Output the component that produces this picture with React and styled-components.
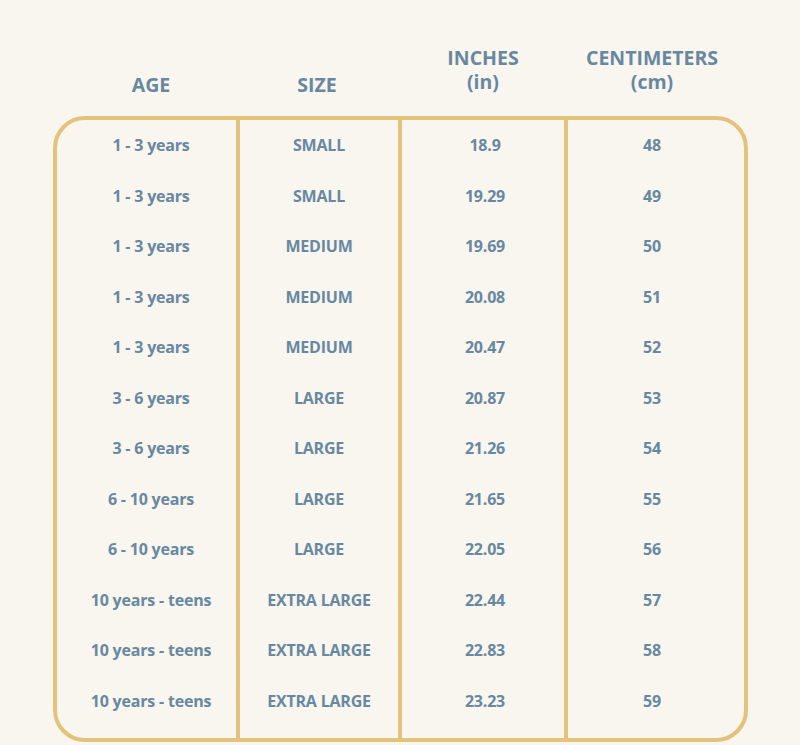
import React from "react";
import styled, { createGlobalStyle } from "styled-components";

const GlobalStyle = createGlobalStyle`
  html, body {
    margin: 0;
    padding: 0;
    background: #f8f6ee;
  }
  body {
    font-family: "Open Sans", "Liberation Sans", sans-serif;
    color: #6888a2;
  }
`;

const columns = [
  { key: "age", width: 183, padLeft: 13, padRight: 0 },
  { key: "size", width: 162, padLeft: 0, padRight: 0 },
  { key: "inches", width: 166, padLeft: 4, padRight: 0 },
  { key: "cm", width: 184, padLeft: 0, padRight: 8 },
];

const rows = [
  ["1 - 3 years", "SMALL", "18.9", "48"],
  ["1 - 3 years", "SMALL", "19.29", "49"],
  ["1 - 3 years", "MEDIUM", "19.69", "50"],
  ["1 - 3 years", "MEDIUM", "20.08", "51"],
  ["1 - 3 years", "MEDIUM", "20.47", "52"],
  ["3 - 6 years", "LARGE", "20.87", "53"],
  ["3 - 6 years", "LARGE", "21.26", "54"],
  ["6 - 10 years", "LARGE", "21.65", "55"],
  ["6 - 10 years", "LARGE", "22.05", "56"],
  ["10 years - teens", "EXTRA LARGE", "22.44", "57"],
  ["10 years - teens", "EXTRA LARGE", "22.83", "58"],
  ["10 years - teens", "EXTRA LARGE", "23.23", "59"],
];

const headers = [
  ["AGE"],
  ["SIZE"],
  ["INCHES", "(in)"],
  ["CENTIMETERS", "(cm)"],
];

const Page = styled.div`
  width: 800px;
  height: 745px;
  padding-left: 53px;
  box-sizing: border-box;
  overflow: hidden;
`;

const HeaderRow = styled.div`
  display: flex;
  align-items: flex-end;
  padding-top: 46px;
  height: 94px;
  box-sizing: border-box;
  margin-bottom: 22px;
`;

const HeaderCell = styled.div`
  width: ${(p) => p.$width}px;
  padding-left: ${(p) => p.$padLeft}px;
  padding-right: ${(p) => p.$padRight}px;
  box-sizing: border-box;
  text-align: center;
  font-size: 19.5px;
  font-weight: 700;
  line-height: 24px;
  margin-bottom: ${(p) => (p.$single ? -3 : 0)}px;
`;

const Table = styled.div`
  display: flex;
  width: 695px;
  height: 626px;
  box-sizing: border-box;
  border: 4px solid #e5c27c;
  border-radius: 32px;
`;

const Column = styled.div`
  display: flex;
  flex-direction: column;
  width: ${(p) => p.$width}px;
  padding-left: ${(p) => p.$padLeft}px;
  padding-right: ${(p) => p.$padRight}px;
  box-sizing: border-box;
  border-left: ${(p) => (p.$first ? "none" : "4px solid #e5c27c")};
`;

const Cell = styled.div`
  height: 50.5px;
  display: flex;
  align-items: center;
  justify-content: center;
  font-size: 16px;
  font-weight: 700;
  letter-spacing: -0.2px;
  white-space: nowrap;
`;

export default function App() {
  return (
    <>
      <GlobalStyle />
      <Page>
        <HeaderRow>
          {headers.map((lines, i) => (
            <HeaderCell
              key={columns[i].key}
              $width={columns[i].width - (i === 0 ? 0 : 0)}
              $padLeft={columns[i].padLeft}
              $padRight={columns[i].padRight}
              $single={lines.length === 1}
            >
              {lines.map((line) => (
                <div key={line}>{line}</div>
              ))}
            </HeaderCell>
          ))}
        </HeaderRow>
        <Table>
          {columns.map((col, i) => (
            <Column
              key={col.key}
              $first={i === 0}
              $width={i === 0 ? col.width - 4 : i === 3 ? col.width - 4 : col.width}
              $padLeft={i === 0 ? col.padLeft - 4 : col.padLeft}
              $padRight={col.padRight}
            >
              {rows.map((row, r) => (
                <Cell key={r}>{row[i]}</Cell>
              ))}
            </Column>
          ))}
        </Table>
      </Page>
    </>
  );
}
